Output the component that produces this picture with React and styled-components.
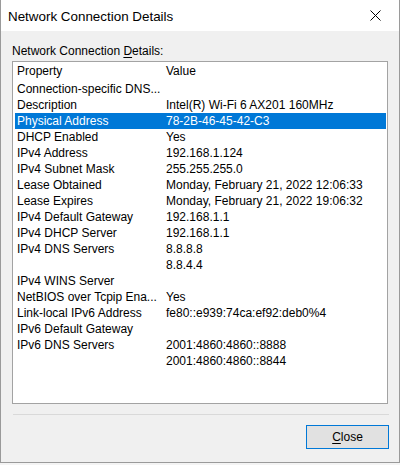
import React from "react";
import styled, { createGlobalStyle } from "styled-components";

const Global = createGlobalStyle`
  html, body { margin: 0; padding: 0; background: #f4f4f4; }
  body { font-family: "Liberation Sans", Arial, sans-serif; }
`;

const Window = styled.div`
  width: 400px;
  height: 463px;
  box-sizing: border-box;
  border: 1px solid #9a9a9a;
  border-top: none;
  background: #f0f0f0;
  display: flex;
  flex-direction: column;
`;

const TitleBar = styled.div`
  height: 31px;
  background: #ffffff;
  display: flex;
  align-items: center;
  justify-content: space-between;
  padding: 0 0 0 7px;
  flex-shrink: 0;
`;

const Title = styled.div`
  font-size: 13.4px;
  color: #000;
  padding-top: 2px;
`;

const CloseX = styled.div`
  width: 46px;
  height: 31px;
  display: flex;
  align-items: center;
  justify-content: center;
  margin-right: 1px;
`;

const Body = styled.div`
  flex: 1;
  display: flex;
  flex-direction: column;
  padding: 12px 10px 0 11px;
`;

const Label = styled.div`
  font-size: 12px;
  line-height: 16px;
  color: #000;
  margin-bottom: 2px;
`;

const Acc = styled.span`
  text-decoration: underline;
  text-underline-offset: 2px;
`;

const ListBox = styled.div`
  height: 343px;
  box-sizing: border-box;
  border: 1px solid #a3a3a3;
  background: #fff;
  padding: 0 1px 0 2px;
  margin-right: 1px;
`;

const Row = styled.div`
  display: grid;
  grid-template-columns: 149px 1fr;
  height: ${(p) => (p.$header ? 19 : 16)}px;
  line-height: ${(p) => (p.$header ? 19 : 16)}px;
  font-size: 12px;
  white-space: nowrap;
  color: ${(p) => (p.$selected ? "#fff" : "#000")};
  background: ${(p) => (p.$selected ? "#0078d7" : "transparent")};
`;

const Cell = styled.div`
  padding-left: 2px;
  overflow: hidden;
`;

const Separator = styled.div`
  height: 1px;
  background: #d9d9d9;
  margin: 10px 0 10px 1px;
`;

const Footer = styled.div`
  display: flex;
  justify-content: flex-end;
`;

const Button = styled.button`
  width: 83px;
  height: 24px;
  box-sizing: border-box;
  border: 1px solid #0078d7;
  background: #e1e1e1;
  font-family: "Liberation Sans", Arial, sans-serif;
  font-size: 12px;
  color: #000;
  padding: 0;
  margin: 0;
`;

const rows = [
  ["Connection-specific DNS...", ""],
  ["Description", "Intel(R) Wi-Fi 6 AX201 160MHz"],
  ["Physical Address", "78-2B-46-45-42-C3", true],
  ["DHCP Enabled", "Yes"],
  ["IPv4 Address", "192.168.1.124"],
  ["IPv4 Subnet Mask", "255.255.255.0"],
  ["Lease Obtained", "Monday, February 21, 2022 12:06:33"],
  ["Lease Expires", "Monday, February 21, 2022 19:06:32"],
  ["IPv4 Default Gateway", "192.168.1.1"],
  ["IPv4 DHCP Server", "192.168.1.1"],
  ["IPv4 DNS Servers", "8.8.8.8"],
  ["", "8.8.4.4"],
  ["IPv4 WINS Server", ""],
  ["NetBIOS over Tcpip Ena...", "Yes"],
  ["Link-local IPv6 Address", "fe80::e939:74ca:ef92:deb0%4"],
  ["IPv6 Default Gateway", ""],
  ["IPv6 DNS Servers", "2001:4860:4860::8888"],
  ["", "2001:4860:4860::8844"],
];

export default function App() {
  return (
    <>
      <Global />
      <Window>
        <TitleBar>
          <Title>Network Connection Details</Title>
          <CloseX>
            <svg width="11" height="11" viewBox="0 0 11 11">
              <path d="M0.5 0.5 L10.5 10.5 M10.5 0.5 L0.5 10.5" stroke="#000" strokeWidth="1" fill="none" />
            </svg>
          </CloseX>
        </TitleBar>
        <Body>
          <Label>
            Network Connection <Acc>D</Acc>etails:
          </Label>
          <ListBox>
            <Row $header>
              <Cell>Property</Cell>
              <Cell>Value</Cell>
            </Row>
            {rows.map(([k, v, sel], i) => (
              <Row key={i} $selected={sel}>
                <Cell>{k}</Cell>
                <Cell>{v}</Cell>
              </Row>
            ))}
          </ListBox>
          <Separator />
          <Footer>
            <Button>
              <Acc>C</Acc>lose
            </Button>
          </Footer>
        </Body>
      </Window>
    </>
  );
}
